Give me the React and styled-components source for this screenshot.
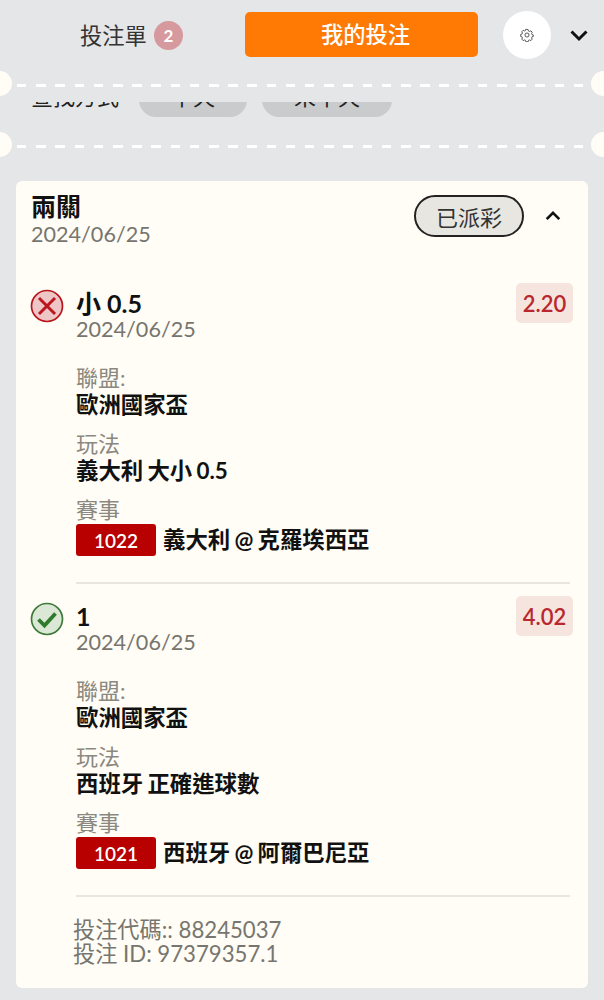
import React from 'react'
import styled, { createGlobalStyle } from 'styled-components'

const FONT = `Lato, "Noto Sans CJK TC", sans-serif`

const legs = [
  { status: 'lost', title: '小 0.5', date: '2024/06/25', odds: '2.20', league: '歐洲國家盃', market: '義大利 大小 0.5', code: '1022', match: '義大利 @ 克羅埃西亞' },
  { status: 'won', title: '1', date: '2024/06/25', odds: '4.02', league: '歐洲國家盃', market: '西班牙 正確進球數', code: '1021', match: '西班牙 @ 阿爾巴尼亞' },
]

function LostIcon() {
  return (
    <svg width="34" height="34" viewBox="0 0 34 34">
      <circle cx="17" cy="17" r="15.5" fill="#efc6c6" stroke="#b8141c" strokeWidth="1.7" />
      <path d="M9 9l16 16M25 9L9 25" fill="none" stroke="#bc1620" strokeWidth="3" />
    </svg>
  )
}

function WonIcon() {
  return (
    <svg width="34" height="34" viewBox="0 0 34 34">
      <circle cx="17" cy="17" r="15.5" fill="#dbe8d6" stroke="#3d7a3a" strokeWidth="1.7" />
      <path d="M8.5 17.5l6 6L25.5 11.5" fill="none" stroke="#2f7a2c" strokeWidth="3.8" />
    </svg>
  )
}

function Gear() {
  return (
    <svg width="14" height="14" viewBox="0 0 24 24" fill="none" stroke="#444" strokeWidth="1.5">
      <path d="M12 2.5l2 .4.7 2.4 1.7.7 2.2-1.2 2.4 2.6-1.2 2.1.7 1.7 2.3.7v2.6l-2.3.7-.7 1.7 1.2 2.1-2.4 2.6-2.2-1.2-1.7.7-.7 2.4h-4l-.7-2.4-1.7-.7-2.2 1.2-2.4-2.6 1.2-2.1-.7-1.7-2.3-.7V11l2.3-.7.7-1.7-1.2-2.1 2.4-2.6 2.2 1.2 1.7-.7.7-2.4z" />
      <circle cx="12" cy="12" r="3.5" />
    </svg>
  )
}

function Chevron({ up, size = 20 }) {
  return (
    <svg width={size} height={size} viewBox="0 0 20 20" fill="none" stroke="#111" strokeWidth="3">
      <path d={up ? 'M3 13.5l7-7 7 7' : 'M2.5 6.5l7.5 7.5 7.5-7.5'} />
    </svg>
  )
}

export default function App() {
  return (
    <Page>
      <GlobalStyle />
      <TopBar>
        <SlipTab>
          <SlipLabel>投注單</SlipLabel>
          <CountBadge>2</CountBadge>
        </SlipTab>
        <MyBets>我的投注</MyBets>
        <GearButton><Gear /></GearButton>
        <Collapse><Chevron size={20} /></Collapse>
      </TopBar>
      <Ticket>
        <Dashed />
        <FilterClip>
          <FilterRow>
            <FilterLabel>查找方式</FilterLabel>
            <FilterPill>半天</FilterPill>
            <FilterPill>未半天</FilterPill>
          </FilterRow>
        </FilterClip>
        <Dashed />
      </Ticket>
      <Card>
        <CardHead>
          <div>
            <BetType>兩關</BetType>
            <DateText>2024/06/25</DateText>
          </div>
          <HeadActions>
            <StatusPill>已派彩</StatusPill>
            <Chevron up size={18} />
          </HeadActions>
        </CardHead>
        {legs.map((leg) => (
          <Leg key={leg.code}>
            <LegIcon>{leg.status === 'lost' ? <LostIcon /> : <WonIcon />}</LegIcon>
            <LegBody>
              <LegTop>
                <LegHeading>
                  <LegTitle>{leg.title}</LegTitle>
                  <DateText>{leg.date}</DateText>
                </LegHeading>
                <Odds>{leg.odds}</Odds>
              </LegTop>
              <Field $first>
                <FieldLabel>聯盟:</FieldLabel>
                <FieldValue>{leg.league}</FieldValue>
              </Field>
              <Field>
                <FieldLabel>玩法</FieldLabel>
                <FieldValue>{leg.market}</FieldValue>
              </Field>
              <Field>
                <FieldLabel>賽事</FieldLabel>
                <MatchRow>
                  <MatchCode>{leg.code}</MatchCode>
                  <FieldValue>{leg.match}</FieldValue>
                </MatchRow>
              </Field>
              <Divider />
            </LegBody>
          </Leg>
        ))}
        <Footer>
          <div>投注代碼:: 88245037</div>
          <div>投注 ID: 97379357.1</div>
        </Footer>
      </Card>
    </Page>
  )
}

const GlobalStyle = createGlobalStyle`
  html, body { margin: 0; padding: 0; background: #e4e6e8; }
  * { box-sizing: border-box; }
  body { font-family: ${FONT}; }
`
const Page = styled.div`
  width: 604px;
  height: 1000px;
  overflow: hidden;
  background: #e4e6e8;
`
const TopBar = styled.div`
  height: 70px;
  display: flex;
  align-items: center;
  padding: 0 0 0 80px;
`
const SlipTab = styled.div`
  width: 165px;
  display: flex;
  align-items: center;
  color: #333;
`
const SlipLabel = styled.span`
  font-size: 22.3px;
  margin-top: -3px;
`
const CountBadge = styled.span`
  width: 29px;
  height: 29px;
  margin-left: 7px;
  border-radius: 50%;
  background: #d69a9e;
  color: #fff;
  font-size: 17px;
  font-weight: 700;
  display: flex;
  align-items: center;
  justify-content: center;
`
const MyBets = styled.div`
  width: 233px;
  height: 45px;
  margin-top: -1px;
  padding: 0 0 3px 8px;
  border-radius: 5px;
  background: #ff7a05;
  color: #fff;
  font-size: 22.3px;
  font-weight: 500;
  display: flex;
  align-items: center;
  justify-content: center;
`
const GearButton = styled.div`
  width: 48px;
  height: 48px;
  margin-left: 25px;
  border-radius: 50%;
  background: #fff;
  display: flex;
  align-items: center;
  justify-content: center;
`
const Collapse = styled.div`
  margin-left: 18px;
  display: flex;
`
const Ticket = styled.div`
  padding-top: 14px;
  display: flex;
  flex-direction: column;
`
const Dashed = styled.div`
  position: relative;
  height: 3px;
  margin: 0 14px 0 17px;
  background: repeating-linear-gradient(to right, #fff 0 9.5px, transparent 9.5px 19.2px);

  &::before, &::after {
    content: '';
    position: absolute;
    top: -13px;
    width: 25px;
    height: 25px;
    border-radius: 50%;
    background: #fffdf5;
  }
  &::before { left: -30px; }
  &::after { right: -26px; }
`
const FilterClip = styled.div`
  height: 58px;
  padding-top: 15px;
`
const FilterRow = styled.div`
  height: 15px;
  overflow: hidden;
  display: flex;
  align-items: flex-end;
  padding-left: 31px;
`
const FilterLabel = styled.div`
  flex: none;
  width: 108px;
  margin-bottom: 5px;
  font-size: 22px;
  line-height: 30px;
  color: #222;
`
const FilterPill = styled.div`
  flex: none;
  height: 34px;
  margin-right: 15px;
  padding: 0 32px;
  border-radius: 17px;
  background: #c9cbcd;
  color: #222;
  font-size: 22px;
  line-height: 28px;
  text-align: center;
`
const Card = styled.div`
  margin: 33px 16px 0;
  height: 807px;
  padding: 13px 15px 0;
  border-radius: 6px;
  background: #fffdf5;
  overflow: hidden;
`
const CardHead = styled.div`
  display: flex;
  justify-content: space-between;
  align-items: flex-start;
`
const BetType = styled.div`
  margin: -1px 0 2px;
  font-size: 25px;
  font-weight: 700;
  line-height: 27px;
  color: #111;
`
const DateText = styled.div`
  font-size: 21.6px;
  line-height: 25px;
  color: #77756f;
`
const HeadActions = styled.div`
  display: flex;
  align-items: center;
  gap: 20px;
  padding: 1px 11px 0 0;
`
const StatusPill = styled.div`
  width: 110px;
  height: 42px;
  border: 2px solid #222;
  border-radius: 21px;
  background: #e8e6e1;
  color: #333;
  font-size: 22px;
  display: flex;
  align-items: center;
  justify-content: center;
`
const Leg = styled.div`
  display: flex;
  margin-top: 36px;

  & + & { margin-top: 12px; }
`
const LegIcon = styled.div`
  flex: none;
  width: 46px;
  height: 40px;
  margin-left: -1px;
  padding-top: 6px;
`
const LegBody = styled.div`
  flex: 1;
  min-width: 0;
  padding-right: 3px;
`
const LegTop = styled.div`
  display: flex;
  justify-content: space-between;
  align-items: flex-start;
`
const LegHeading = styled.div`
  padding-top: 6px;
`
const LegTitle = styled.div`
  font-size: 25px;
  font-weight: 700;
  line-height: 28px;
  color: #111;
`
const Odds = styled.div`
  width: 57px;
  height: 40px;
  margin-right: -3px;
  border-radius: 5px;
  background: #f6e5df;
  color: #b8282e;
  font-size: 22px;
  font-weight: 600;
  display: flex;
  align-items: center;
  justify-content: center;
`
const Field = styled.div`
  margin-top: ${(props) => (props.$first ? '22px' : '12px')};
`
const FieldLabel = styled.div`
  font-size: 22px;
  line-height: 28px;
  color: #8a8880;
`
const FieldValue = styled.div`
  font-size: 22.4px;
  font-weight: 700;
  line-height: 26px;
  word-spacing: -1.2px;
  color: #111;
`
const MatchRow = styled.div`
  display: flex;
  align-items: center;
  gap: 7px;
  height: 32px;
`
const MatchCode = styled.div`
  width: 80px;
  height: 32px;
  border-radius: 3px;
  background: #b80000;
  color: #fff;
  font-size: 19px;
  font-weight: 600;
  display: flex;
  align-items: center;
  justify-content: center;
`
const Divider = styled.div`
  height: 2px;
  margin-top: 26px;
  background: #e8e6e1;
`
const Footer = styled.div`
  margin-top: 21px;
  padding-left: 42px;
  font-size: 22.2px;
  line-height: 24px;
  color: #77756f;
`
